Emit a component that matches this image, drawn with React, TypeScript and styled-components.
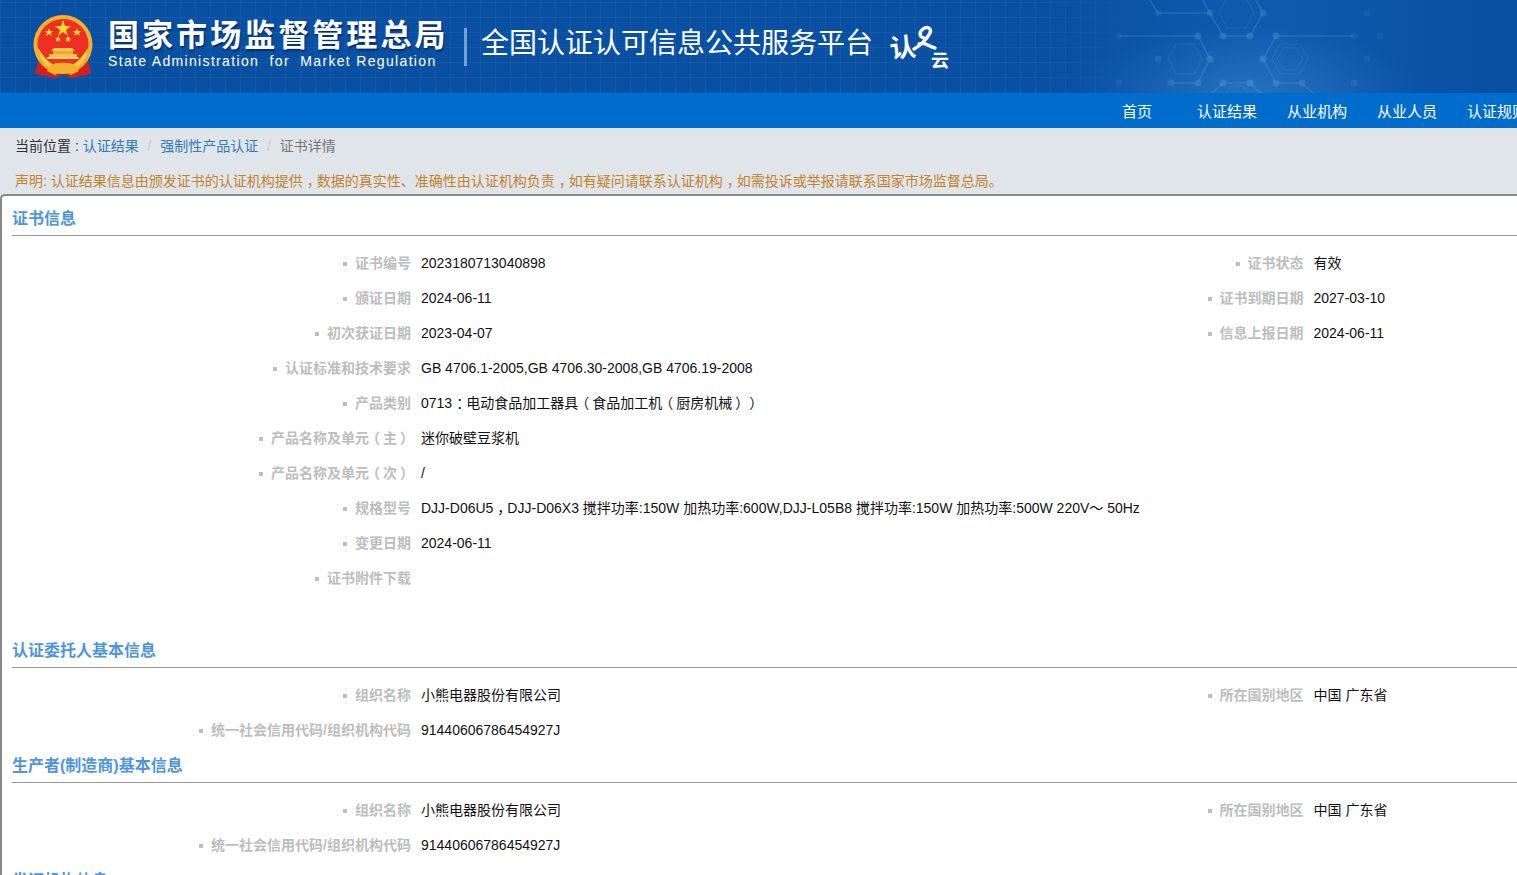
import styled, { createGlobalStyle } from "styled-components";

const GlobalStyle = createGlobalStyle`
  html, body {
    margin: 0;
    padding: 0;
    height: 875px;
    overflow: hidden;
    background: #e0e5ea;
  }
  body {
    font-family: "Liberation Sans", "Noto Sans CJK SC", sans-serif;
    font-size: 14px;
    color: #333;
    text-spacing-trim: space-all;
  }
  * {
    box-sizing: border-box;
  }
`;

const Page = styled.div`
  width: 1517px;
  height: 875px;
  overflow: hidden;
`;

const Banner = styled.header`
  position: relative;
  height: 93px;
  padding-left: 33px;
  display: flex;
  align-items: center;
  overflow: hidden;
  background-color: #0a50a2;
  background-image:
    radial-gradient(ellipse 170px 70px at 1250px 95px, rgba(70, 150, 215, 0.4), rgba(70, 150, 215, 0)),
    linear-gradient(90deg, rgba(18, 92, 176, 0) 1050px, rgba(18, 92, 176, 0.85) 1260px, rgba(10, 80, 162, 0) 1480px),
    linear-gradient(90deg, rgba(10, 80, 162, 0) 1040px, #0a50a2 1140px),
    repeating-linear-gradient(90deg, rgba(90, 150, 220, 0.1) 0 1px, transparent 1px 15px),
    repeating-linear-gradient(0deg, rgba(90, 150, 220, 0.1) 0 1px, transparent 1px 15px);
`;

const Emblem = styled.svg`
  width: 60px;
  height: 64px;
  margin-right: 15px;
  flex: none;
`;

const Agency = styled.div`
  width: 340px;
  padding-bottom: 5px;
  color: #fff;
`;

const AgencyName = styled.div`
  font-size: 31px;
  font-weight: 700;
  line-height: 36px;
  letter-spacing: 3.05px;
  white-space: nowrap;
  text-shadow: 1px 2px 2px rgba(0, 30, 80, 0.7);
`;

const AgencyEnglish = styled.div`
  font-size: 14px;
  line-height: 18px;
  letter-spacing: 1.33px;
  white-space: pre;
  margin-top: -2px;
`;

const Divider = styled.div`
  width: 3px;
  height: 38px;
  margin: 0 14px 0 16px;
  background: rgba(255, 255, 255, 0.45);
  flex: none;
`;

const Platform = styled.div`
  font-size: 28px;
  font-weight: 400;
  color: #fff;
  white-space: nowrap;
  width: 408px;
  line-height: 40px;
  padding-bottom: 6px;
  height: 46px;
`;

const CloudLogo = styled.svg`
  width: 62px;
  height: 50px;
  margin-top: 5px;
  flex: none;
`;

const Hexes = styled.svg`
  position: absolute;
  top: 0;
  left: 1100px;
  width: 300px;
  height: 93px;
`;

const Nav = styled.nav`
  height: 35px;
  padding-left: 1092px;
  display: flex;
  background: #006dcc;
  overflow: hidden;
`;

const NavItem = styled.a`
  flex: none;
  width: 90px;
  font-size: 15px;
  line-height: 37px;
  text-align: center;
  white-space: nowrap;
  color: #fff;
`;

const Crumbs = styled.div`
  height: 36px;
  padding-left: 15px;
  display: flex;
  align-items: center;
  line-height: 20px;
`;

const CrumbLink = styled.a<{ $current?: boolean }>`
  color: ${(props) => (props.$current ? "#777" : "#337ab7")};
`;

const CrumbSep = styled.span`
  color: #ccc;
  width: 21.5px;
  text-align: center;
`;

const Notice = styled.div`
  height: 30px;
  padding-left: 15px;
  padding-top: 7px;
  line-height: 20px;
  color: #c4822a;
  white-space: nowrap;
`;

const Panel = styled.main`
  width: 1560px;
  height: 700px;
  padding: 5px 0 0 10px;
  background: #fff;
  border-top: 2px solid #888;
  border-left: 2px solid #888;
  border-top-left-radius: 5px;
`;

const SectionTitle = styled.h3<{ $gap?: number }>`
  margin: ${(props) => props.$gap ?? 0}px 0 0;
  height: 35px;
  font-size: 16px;
  font-weight: 700;
  line-height: 36px;
  color: #4f94e0;
  border-bottom: 1px solid #999;
`;

const Rows = styled.div`
  padding-top: 10px;
`;

const Row = styled.div`
  display: flex;
  height: 35px;
`;

const Field = styled.div`
  flex: none;
  width: 892.5px;
  display: flex;
  line-height: 35px;
`;

const Label = styled.div`
  flex: none;
  width: 399px;
  text-align: right;
  font-weight: 700;
  color: #bdbdbd;
  white-space: nowrap;
  &::before {
    content: "";
    display: inline-block;
    width: 4px;
    height: 4px;
    margin-right: 8px;
    vertical-align: 2px;
    background: #bdbdbd;
  }
`;

const Value = styled.div`
  padding-left: 10px;
  color: #111;
  white-space: nowrap;
`;

// the source page centres its full-width marks inside the em box
const Mark = styled.span<{ $shift: number }>`
  display: inline-block;
  transform: translateX(${(props) => props.$shift}px);
`;

const markShift: Record<string, number> = { "（": -3, "）": 3, "，": 4, "：": 4 };

function marks(text: string) {
  return text.split(/([，：（）])/).map((part, i) =>
    part in markShift ? (
      <Mark key={i} $shift={markShift[part]}>
        {part}
      </Mark>
    ) : (
      part
    ),
  );
}

type Item = [string, string];

const certificate: { left: Item; right?: Item }[] = [
  { left: ["证书编号", "2023180713040898"], right: ["证书状态", "有效"] },
  { left: ["颁证日期", "2024-06-11"], right: ["证书到期日期", "2027-03-10"] },
  { left: ["初次获证日期", "2023-04-07"], right: ["信息上报日期", "2024-06-11"] },
  { left: ["认证标准和技术要求", "GB 4706.1-2005,GB 4706.30-2008,GB 4706.19-2008"] },
  { left: ["产品类别", "0713：电动食品加工器具（食品加工机（厨房机械））"] },
  { left: ["产品名称及单元（主）", "迷你破壁豆浆机"] },
  { left: ["产品名称及单元（次）", "/"] },
  {
    left: [
      "规格型号",
      "DJJ-D06U5，DJJ-D06X3 搅拌功率:150W 加热功率:600W,DJJ-L05B8 搅拌功率:150W 加热功率:500W 220V～ 50Hz",
    ],
  },
  { left: ["变更日期", "2024-06-11"] },
  { left: ["证书附件下载", ""] },
];

const company: { left: Item; right?: Item }[] = [
  { left: ["组织名称", "小熊电器股份有限公司"], right: ["所在国别地区", "中国 广东省"] },
  { left: ["统一社会信用代码/组织机构代码", "91440606786454927J"] },
];

const navItems = ["首页", "认证结果", "从业机构", "从业人员", "认证规则"];

const nodes = [
  [58, 13], [110, 13], [163, 13], [123, 36], [150, 36], [98, 36], [19, 36], [176, 36], [254, 36],
  [267, 13], [110, 59], [58, 59], [71, 83], [98, 83], [123, 83], [150, 83], [176, 83], [202, 83],
  [163, 59], [267, 59], [19, 83], [254, 83], [280, 36],
];

const links = [
  "M50 0L58 13H110L123 36H150L163 13L150 -10",
  "M110 13L97 -10",
  "M19 36H98L110 59L98 83H71",
  "M176 36H254",
  "M176 36L163 59L176 83H202L215 95",
  "M123 83H150L163 95",
  "M123 83L110 95",
];

const hexagons = [
  "M68 59L76 44H94L102 59L94 74H76Z",
  "M119 13L127 -2H146L154 13L146 28H127Z",
  "M172 59L180 44H200L208 59L200 74H180Z",
  "M177 59L184 48H196L203 59L196 70H184Z",
  "M123 97L131 86H143L151 97",
];

function EmblemMark() {
  return (
    <Emblem viewBox="0 0 60 64">
      <path d="M6 45L2 58L12 61L22 63L30 59L38 63L48 61L58 58L54 45L30 56Z" fill="#d3201f" />
      <circle cx="30" cy="29.500" r="29.500" fill="#f2b02e" />
      <circle cx="30" cy="29.500" r="25.500" fill="#ee2f24" />
      <path d="M5 33C6 48 18 55 30 55C42 55 54 48 55 33L50 40C44 49 37 51 30 51C23 51 16 49 10 40Z" fill="#fbcb45" />
      <path d="M30 5L32 11H38L33 15L35 21L30 17L25 21L27 15L22 11H28Z" fill="#fdd835" />
      <path d="M16 13L17 16H20L18 18L19 21L16 19L13 21L14 18L12 16H15Z" fill="#fdd835" />
      <path d="M44 13L45 16H48L46 18L47 21L44 19L41 21L42 18L40 16H43Z" fill="#fdd835" />
      <path d="M25 21L26 23H28L26.500 24.500L27 27L25 25.500L23 27L23.500 24.500L22 23H24Z" fill="#fdd835" />
      <path d="M35 21L36 23H38L36.500 24.500L37 27L35 25.500L33 27L33.500 24.500L32 23H34Z" fill="#fdd835" />
      <path d="M21 33H39L42 36H18Z" fill="#f8c84e" />
      <rect x="20" y="36" width="20" height="3" fill="#f3a63a" />
      <rect x="16" y="39" width="28" height="3" fill="#f9c14a" />
      <rect x="14" y="42" width="32" height="2" fill="#f8d671" />
      <path d="M18 50C22 47 38 47 42 50L46 56L38 60L30 55L22 60L14 56Z" fill="#f4b12c" />
      <path d="M5 48L13 56L10 61L2 58ZM55 48L47 56L50 61L58 58Z" fill="#d3201f" />
    </Emblem>
  );
}

function CloudMark() {
  return (
    <CloudLogo viewBox="0 0 62 50">
      <text
        x="1"
        y="33"
        fontSize="26"
        fontWeight="700"
        fill="#fff"
        fontFamily='"Noto Sans CJK SC", sans-serif'
        transform="rotate(-6 14 26)"
      >
        认
      </text>
      <path
        d="M25 25C31 22 38 15 41 9C43 4 38 2 34 5C30 8 30 13 35 14M30 20C36 17 40 23 46 24"
        fill="none"
        stroke="#fff"
        strokeWidth="3.400"
        strokeLinecap="round"
      />
      <text
        x="42"
        y="43"
        fontSize="18"
        fontWeight="700"
        fill="#fff"
        fontFamily='"Noto Sans CJK SC", sans-serif'
      >
        云
      </text>
    </CloudLogo>
  );
}

function InfoRows({ rows }: { rows: { left: Item; right?: Item }[] }) {
  return (
    <Rows>
      {rows.map((row) => (
        <Row key={row.left[0]}>
          <Field>
            <Label>{marks(row.left[0])}</Label>
            <Value>{marks(row.left[1])}</Value>
          </Field>
          {row.right && (
            <Field>
              <Label>{row.right[0]}</Label>
              <Value>{row.right[1]}</Value>
            </Field>
          )}
        </Row>
      ))}
    </Rows>
  );
}

function App() {
  return (
    <Page>
      <GlobalStyle />
      <Banner>
        <Hexes viewBox="0 0 300 93">
          {links.map((d) => (
            <path key={d} d={d} fill="none" stroke="#5f9fdc" strokeOpacity="0.38" strokeWidth="1.100" />
          ))}
          {hexagons.map((d) => (
            <path key={d} d={d} fill="none" stroke="#5f9fdc" strokeOpacity="0.2" strokeWidth="1" />
          ))}
          {nodes.map(([x, y]) => (
            <circle
              key={`${x}-${y}`}
              cx={x}
              cy={y}
              r="3.500"
              fill="#3f87cf"
              fillOpacity={Math.max(0.18, 0.8 - Math.hypot(x - 150, y - 83) / 190)}
            />
          ))}
        </Hexes>
        <EmblemMark />
        <Agency>
          <AgencyName>国家市场监督管理总局</AgencyName>
          <AgencyEnglish>State Administration  for  Market Regulation</AgencyEnglish>
        </Agency>
        <Divider />
        <Platform>全国认证认可信息公共服务平台</Platform>
        <CloudMark />
      </Banner>
      <Nav>
        {navItems.map((item) => (
          <NavItem key={item}>{item}</NavItem>
        ))}
      </Nav>
      <Crumbs>
        当前位置 :&nbsp;
        <CrumbLink>认证结果</CrumbLink>
        <CrumbSep>/</CrumbSep>
        <CrumbLink>强制性产品认证</CrumbLink>
        <CrumbSep>/</CrumbSep>
        <CrumbLink $current>证书详情</CrumbLink>
      </Crumbs>
      <Notice>
        {marks(
          "声明: 认证结果信息由颁发证书的认证机构提供，数据的真实性、准确性由认证机构负责，如有疑问请联系认证机构，如需投诉或举报请联系国家市场监督总局。",
        )}
      </Notice>
      <Panel>
        <SectionTitle>证书信息</SectionTitle>
        <InfoRows rows={certificate} />
        <SectionTitle $gap={37}>认证委托人基本信息</SectionTitle>
        <InfoRows rows={company} />
        <SectionTitle>生产者(制造商)基本信息</SectionTitle>
        <InfoRows rows={company} />
        <SectionTitle>发证机构信息</SectionTitle>
      </Panel>
    </Page>
  );
}

export default App;
